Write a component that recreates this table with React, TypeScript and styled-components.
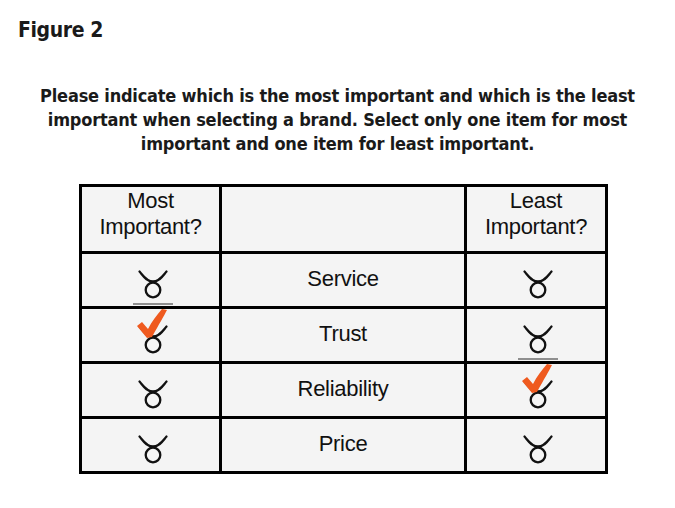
import React from "react";
import styled, { createGlobalStyle } from "styled-components";

const GlobalStyle = createGlobalStyle`
  html, body {
    margin: 0;
    padding: 0;
    background: #ffffff;
  }
`;

const Page = styled.div`
  width: 675px;
  height: 508px;
  background: #ffffff;
  padding: 14px 0 0 0;
  box-sizing: border-box;
  font-family: "DejaVu Sans Condensed", "DejaVu Sans", sans-serif;
  color: #1a1a1a;
`;

const Title = styled.h1`
  margin: 0 0 0 18px;
  font-size: 21px;
  font-weight: bold;
  line-height: 32px;
  letter-spacing: -0.4px;
`;

const Question = styled.p`
  margin: 38px auto 0;
  width: 640px;
  text-align: center;
  font-size: 18px;
  font-weight: bold;
  line-height: 24px;
  letter-spacing: -0.2px;
`;

const Grid = styled.div`
  margin: 28px 0 0 79px;
  width: 529px;
  display: grid;
  grid-template-columns: 137px 242px 138px;
  grid-template-rows: 64px repeat(4, 52px);
  gap: 3px;
  padding: 3px;
  background: #000000;
  box-sizing: border-box;
`;

const Cell = styled.div<{ $head?: boolean }>`
  background: #f4f4f4;
  display: flex;
  flex-direction: column;
  align-items: center;
  justify-content: center;
  padding-bottom: ${(p) => (p.$head ? "10px" : "0")};
  font-family: "Liberation Sans", Arial, sans-serif;
  font-size: 22px;
  letter-spacing: -0.3px;
  line-height: 26px;
  color: #111111;
  text-align: center;
`;

const ChoiceCell = styled.div`
  position: relative;
  background: #f4f4f4;
  display: flex;
  justify-content: center;
  align-items: flex-start;
`;

const Label = styled.span`
  margin-top: -2px;
`;

const Mark = styled.svg`
  display: block;
  flex-shrink: 0;
  margin-left: 6px;
  overflow: visible;
`;

const Shade = styled.div`
  position: absolute;
  top: -6px;
  left: calc(50% - 18px);
  width: 40px;
  height: 2px;
  background: #8f8f8f;
`;

const Choice = ({ checked }: { checked: boolean }) => (
  <ChoiceCell>
    {checked && <Shade />}
    <Mark width="36" height="48" viewBox="0 0 36 48">
      <path
        d="M3.5 17.5 C7 21.5 10.5 27.5 17 27.5 C23.5 27.5 27 21.5 30.5 17.5"
        fill="none"
        stroke="#111"
        strokeWidth="2.3"
        strokeLinecap="round"
      />
      <circle cx="17" cy="36" r="7.3" fill="none" stroke="#111" strokeWidth="2.3" />
      {checked && (
        <path
          d="M1 17 L6 13 L12 20 C16 12 21 6 26 0 L31 1 C28 7 23 15 16 28 L11 29 Z"
          fill="#ef5a1f"
        />
      )}
    </Mark>
  </ChoiceCell>
);

type Row = { name: string; most: boolean; least: boolean };

const rows: Row[] = [
  { name: "Service", most: false, least: false },
  { name: "Trust", most: true, least: false },
  { name: "Reliability", most: false, least: true },
  { name: "Price", most: false, least: false },
];

export default function App() {
  return (
    <Page>
      <GlobalStyle />
      <Title>Figure 2</Title>
      <Question>
        Please indicate which is the most important and which is the least
        important when selecting a brand. Select only one item for most
        important and one item for least important.
      </Question>
      <Grid>
        <Cell $head>
          <span>Most</span>
          <span>Important?</span>
        </Cell>
        <Cell $head />
        <Cell $head>
          <span>Least</span>
          <span>Important?</span>
        </Cell>
        {rows.map((r) => (
          <React.Fragment key={r.name}>
            <Choice checked={r.most} />
            <Cell>
              <Label>{r.name}</Label>
            </Cell>
            <Choice checked={r.least} />
          </React.Fragment>
        ))}
      </Grid>
    </Page>
  );
}
